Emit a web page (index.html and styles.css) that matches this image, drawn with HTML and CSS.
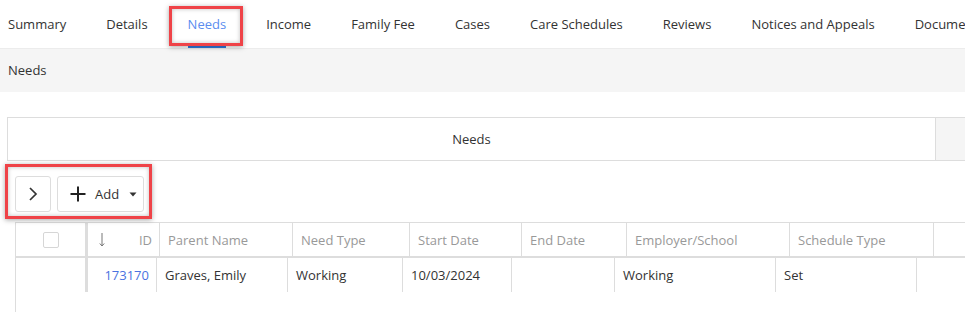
FILE: index.html
```html
<!DOCTYPE html>
<html lang="en">
<head>
  <meta charset="UTF-8">
  <meta name="viewport" content="width=device-width, initial-scale=1.0">
  <title>Needs</title>
  <link rel="stylesheet" href="styles.css">
</head>
<body>
  <div class="page">
    <ul class="tabs">
      <li class="tab first">Summary</li>
      <li class="tab">Details</li>
      <li class="tab active">Needs</li>
      <li class="tab">Income</li>
      <li class="tab">Family Fee</li>
      <li class="tab">Cases</li>
      <li class="tab">Care Schedules</li>
      <li class="tab">Reviews</li>
      <li class="tab">Notices and Appeals</li>
      <li class="tab">Documents</li>
    </ul>

    <div class="crumb">Needs</div>

    <div class="panel">
      <div class="panel-title">Needs</div>
      <div class="panel-side"></div>
    </div>

    <div class="toolbar">
      <button class="btn btn-icon">
        <svg width="12" height="14" viewBox="0 0 12 14"><path d="M3 1 L9 7 L3 13" fill="none" stroke="#333" stroke-width="1.7"/></svg>
      </button>
      <button class="btn btn-add">
        <svg width="16" height="16" viewBox="0 0 16 16"><path d="M8 0.5 V15.5 M0.5 8 H15.5" stroke="#222" stroke-width="2"/></svg>
        <span>Add</span>
        <svg width="8" height="5" viewBox="0 0 8 5"><path d="M0.5 0.5 H7.5 L4 4.5 Z" fill="#333"/></svg>
      </button>
    </div>

    <div class="grid">
      <div class="grid-head">
        <div class="cell check"><span class="box"></span></div>
        <div class="cell id">
          <svg class="sort" width="6" height="14" viewBox="0 0 6 14"><path d="M3 0 V13 M0.8 10.5 L3 13 L5.2 10.5" fill="none" stroke="#777" stroke-width="1"/></svg>
          <span>ID</span>
        </div>
        <div class="cell">Parent Name</div>
        <div class="cell">Need Type</div>
        <div class="cell">Start Date</div>
        <div class="cell">End Date</div>
        <div class="cell">Employer/School</div>
        <div class="cell">Schedule Type</div>
        <div class="cell last"></div>
      </div>
      <div class="grid-row">
        <div class="cell check"></div>
        <div class="cell id"><a href="#">173170</a></div>
        <div class="cell">Graves, Emily</div>
        <div class="cell">Working</div>
        <div class="cell">10/03/2024</div>
        <div class="cell"></div>
        <div class="cell">Working</div>
        <div class="cell">Set</div>
        <div class="cell last"></div>
      </div>
    </div>

    <!-- annotation boxes -->
    <div class="mark mark-tab"></div>
    <div class="mark mark-toolbar"></div>
  </div>
</body>
</html>
```

FILE: styles.css
```css
*{
  margin: 0;
  padding: 0;
  box-sizing: border-box;
  list-style: none;
  text-decoration: none;
}
body{
  font-family: "Segoe UI", "Open Sans", "Liberation Sans", sans-serif;
  font-size: 13px;
  color: #333;
  background: #fff;
  overflow: hidden;
}
.page{
  position: relative;
  height: 312px;
}
.tabs{
  display: flex;
  height: 49px;
  padding-left: 8px;
  border-bottom: 1px solid #ececec;
  white-space: nowrap;
}
.tab{
  padding: 0 20px;
  line-height: 48px;
  color: #333;
}
.tab.first{
  padding-left: 0;
}
.tab.active{
  color: #5b8def;
  background: linear-gradient(#2f7be0, #2f7be0) no-repeat;
  background-size: calc(100% - 40px) 2px;
  background-position: 20px 46px;
}
.crumb{
  height: 43px;
  line-height: 43px;
  padding-left: 8px;
  background: #f5f5f5;
}
.panel{
  display: grid;
  grid-template-columns: 927px 60px;
  margin: 25px 0 0 7px;
  height: 44px;
  width: 990px;
  border: 1px solid #ddd;
}
.panel-title{
  line-height: 42px;
  text-align: center;
}
.panel-side{
  background: #f5f5f5;
  border-left: 1px solid #ddd;
}
.toolbar{
  display: flex;
  gap: 6px;
  margin-top: 15px;
  padding-left: 15px;
}
.btn{
  display: flex;
  align-items: center;
  height: 36px;
  border: 1px solid #ddd;
  border-radius: 3px;
  background: #fff;
  font: inherit;
  color: #333;
}
.btn-icon{
  width: 36px;
  justify-content: center;
}
.btn-add{
  width: 87px;
  padding-left: 12px;
}
.btn-add span{
  margin: 0 10px 0 9px;
}
.grid{
  margin: 10px 0 0 15px;
  border-left: 1px solid #ddd;
  height: 90px;
}
.grid-head,
.grid-row{
  display: grid;
  height: 36px;
}
.grid-head{
  grid-template-columns: 72px 72px 133px 117px 112px 105px 163px 144px 1fr;
  border-top: 1px solid #ddd;
  border-bottom: 2px solid #ddd;
  color: #999;
}
.grid-row{
  grid-template-columns: 72px 69px 131px 115px 109px 103px 161px 141px 1fr;
  height: 34px;
}
.cell{
  display: flex;
  align-items: center;
  padding: 0 7px 0 8px;
  border-right: 1px solid #ddd;
  white-space: nowrap;
  overflow: hidden;
}
.cell.check{
  border-right: 3px solid #ddd;
  justify-content: center;
}
.cell.id{
  justify-content: space-between;
  padding-right: 7px;
}
.grid-row .cell.id{
  justify-content: flex-end;
}
.cell.last{
  border-right: none;
}
.box{
  width: 16px;
  height: 16px;
  border: 1px solid #d6d6d6;
  border-radius: 2px;
  margin-left: -1px;
}
.sort{
  margin-left: 3px;
}
.cell a{
  color: #4a72e0;
}
.mark{
  position: absolute;
  border: 3px solid #ef4348;
  box-shadow: 0 1px 5px rgba(0,0,0,.35), inset 0 0 4px rgba(0,0,0,.25);
}
.mark-tab{
  left: 169px;
  top: 6px;
  width: 74px;
  height: 40px;
}
.mark-toolbar{
  left: 5px;
  top: 164px;
  width: 147px;
  height: 55px;
}
```
